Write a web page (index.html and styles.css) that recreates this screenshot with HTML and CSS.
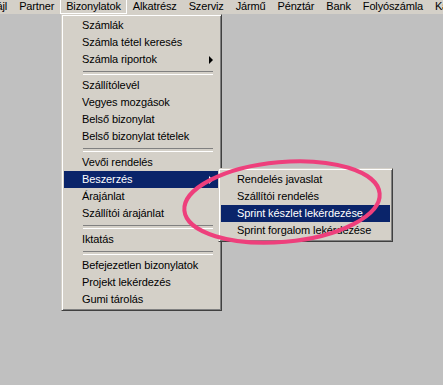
FILE: index.html
```html
<!DOCTYPE html>
<html lang="hu">
<head>
    <meta charset="UTF-8">
    <title>Bizonylatok</title>
    <link rel="stylesheet" href="styles.css">
</head>
<body>
    <div id="desk">
        <ul class="menubar">
            <li class="first">Fájl</li>
            <li>Partner</li>
            <li class="open">Bizonylatok</li>
            <li>Alkatrész</li>
            <li>Szerviz</li>
            <li>Jármű</li>
            <li>Pénztár</li>
            <li>Bank</li>
            <li>Folyószámla</li>
            <li>Karbantartás</li>
        </ul>

        <ul class="menu menu-main">
            <li>Számlák</li>
            <li>Számla tétel keresés</li>
            <li class="has-sub">Számla riportok <span class="arrow"></span></li>
            <li class="sep"></li>
            <li>Szállítólevél</li>
            <li>Vegyes mozgások</li>
            <li>Belső bizonylat</li>
            <li>Belső bizonylat tételek</li>
            <li class="sep"></li>
            <li>Vevői rendelés</li>
            <li class="has-sub active">Beszerzés <span class="arrow"></span></li>
            <li>Árajánlat</li>
            <li>Szállítói árajánlat</li>
            <li class="sep"></li>
            <li>Iktatás</li>
            <li class="sep"></li>
            <li>Befejezetlen bizonylatok</li>
            <li>Projekt lekérdezés</li>
            <li>Gumi tárolás</li>
        </ul>

        <ul class="menu menu-sub">
            <li>Rendelés javaslat</li>
            <li>Szállítói rendelés</li>
            <li class="active">Sprint készlet lekérdezése</li>
            <li>Sprint forgalom lekérdezése</li>
        </ul>

        <!-- kézzel rajzolt kiemelés -->
        <svg class="mark" width="443" height="385" viewBox="0 0 443 385">
            <ellipse cx="282" cy="202" rx="98" ry="40" transform="rotate(-5 282 202)"
                     fill="none" stroke="#ee3f7c" stroke-width="4"/>
        </svg>
    </div>
</body>
</html>
```

FILE: styles.css
```css
*{
    margin: 0;
    padding: 0;
    list-style: none;
    box-sizing: border-box;
}
body{
    background-color: #c0c0c0;
    font-family: "Liberation Sans", Arial, sans-serif;
    font-size: 11px;
    color: #000;
    overflow: hidden;
}
#desk{
    width: 443px;
    height: 385px;
    position: relative;
    overflow: hidden;
}

/* menüsor */
.menubar{
    display: flex;
    height: 14px;
    background-color: #d4d0c8;
    white-space: nowrap;
    letter-spacing: -0.15px;
}
.menubar li{
    padding: 0 6px;
    line-height: 13px;
    height: 14px;
}
.menubar li.first{
    margin-left: -16px;
}
.menubar li.open{
    box-shadow: inset 1px 0 #fff, inset -1px 0 #fff, inset 0 -1px #fff;
}

/* legördülő menük */
.menu{
    position: absolute;
    background-color: #d4d0c8;
    border: 1px solid;
    border-color: #d4d0c8 #404040 #404040 #d4d0c8;
    box-shadow: inset 1px 1px #fff, inset -1px -1px #808080;
    padding: 2px;
    white-space: nowrap;
    letter-spacing: -0.1px;
}
.menu li{
    display: flex;
    justify-content: space-between;
    align-items: center;
    height: 17px;
    line-height: 17px;
}
.menu li.active{
    background-color: #0a246a;
    color: #fff;
}
.menu li.sep{
    height: 9px;
    margin: 0 0 0 1px;
}
.menu li.sep:after{
    content: "";
    display: block;
    width: 100%;
    height: 2px;
    border-top: 1px solid #808080;
    border-bottom: 1px solid #fff;
}
.arrow{
    width: 0;
    height: 0;
    border-left: 4px solid #000;
    border-top: 4px solid transparent;
    border-bottom: 4px solid transparent;
}
.active .arrow{
    border-left-color: #fff;
}

.menu-main{
    left: 61px;
    top: 14px;
    width: 161px;
    z-index: 2;
}
.menu-main li{
    padding: 0 6px 0 18px;
}
.menu-sub{
    left: 218px;
    top: 168px;
    width: 175px;
    z-index: 3;
}
.menu-sub li{
    padding: 0 6px 0 16px;
}

.mark{
    position: absolute;
    left: 0;
    top: 0;
    z-index: 5;
    pointer-events: none;
}
```
